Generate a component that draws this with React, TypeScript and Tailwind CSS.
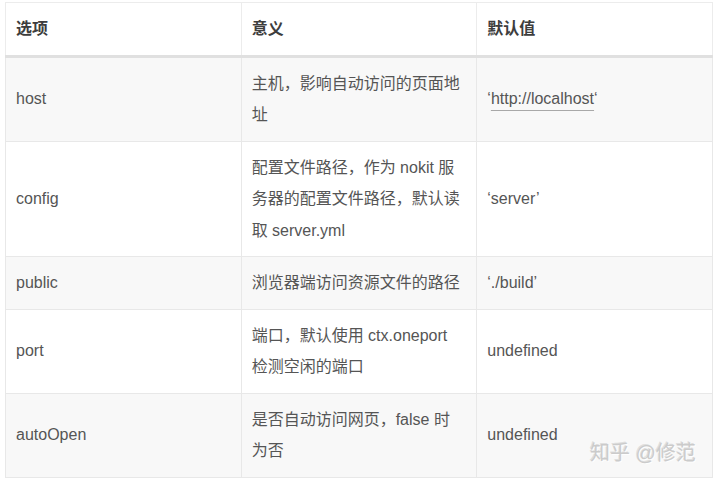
import React from "react"

type Row = {
  name: string
  meaning: string[]
  value: React.ReactNode
}

const rows: Row[] = [
  {
    name: "host",
    meaning: ["主机，影响自动访问的页面地", "址"],
    value: (
      <>
        ‘
        <span className="underline decoration-[#a8a8a8] underline-offset-[6px]">http://localhost</span>‘
      </>
    ),
  },
  {
    name: "config",
    meaning: ["配置文件路径，作为 nokit 服", "务器的配置文件路径，默认读", "取 server.yml"],
    value: "‘server’",
  },
  { name: "public", meaning: ["浏览器端访问资源文件的路径"], value: "‘./build’" },
  { name: "port", meaning: ["端口，默认使用 ctx.oneport", "检测空闲的端口"], value: "undefined" },
  { name: "autoOpen", meaning: ["是否自动访问网页，false 时", "为否"], value: "undefined" },
]

export default function App() {
  return (
    <div
      className="relative h-[481px] w-[720px] overflow-hidden bg-white pl-[5px] pt-[2px]"
      style={{ fontFamily: '"Liberation Sans", "Noto Sans CJK SC", sans-serif' }}
    >
      <table className="w-[708px] table-fixed border-collapse border border-[#e6e6e6] text-[16px] leading-[31.5px] text-[#555]">
        <thead>
          <tr className="bg-white">
            {["选项", "意义", "默认值"].map((h) => (
              <th
                key={h}
                className="border border-b-[3px] border-[#ececec] border-b-[#e0e0e0] px-[10px] py-[10px] text-left font-bold text-[#3d3d3d]"
              >
                {h}
              </th>
            ))}
          </tr>
        </thead>
        <tbody>
          {rows.map((r, i) => (
            <tr key={r.name} className={i % 2 === 0 ? "bg-[#f8f8f8]" : "bg-white"}>
              <td className="border border-[#e8e8e8] px-[10px] py-[10px] align-middle">{r.name}</td>
              <td className="border border-[#e8e8e8] px-[10px] py-[10px] align-middle">
                {r.meaning.map((line, j) => (
                  <div key={j} className="whitespace-nowrap">
                    {line}
                  </div>
                ))}
              </td>
              <td className="border border-[#e8e8e8] px-[10px] py-[10px] align-middle whitespace-nowrap">{r.value}</td>
            </tr>
          ))}
        </tbody>
      </table>

      {/* watermark */}
      <div
        className="absolute left-[590px] top-[440px] whitespace-nowrap text-[20px] leading-[26px] text-[#cbcbcb]"
        style={{ textShadow: "1px 1px 0 rgba(255,255,255,0.9), -1px -1px 0 rgba(150,150,150,0.25)" }}
      >
        知乎 @修范
      </div>
    </div>
  )
}
